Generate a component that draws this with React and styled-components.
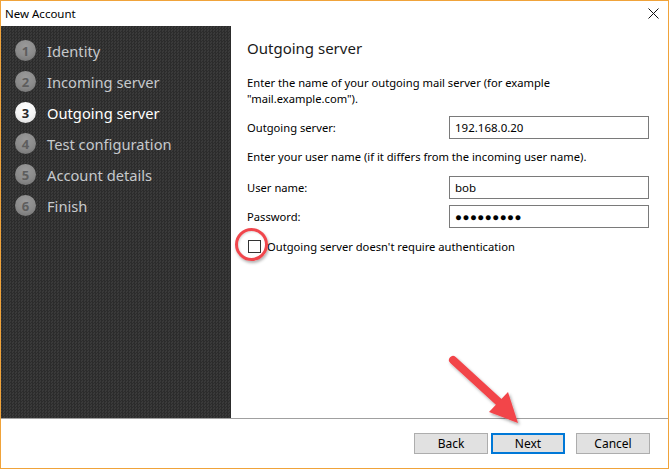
import React from "react";
import styled, { createGlobalStyle } from "styled-components";

const Global = createGlobalStyle`
  html, body { margin: 0; padding: 0; background: #fff; }
  body { font-family: "Noto Sans", "Open Sans", sans-serif; }
  * { box-sizing: border-box; }
`;

const Window = styled.div`
  position: relative;
  width: 669px;
  height: 469px;
  border: 1px solid #f0a33a;
  display: flex;
  flex-direction: column;
  background: #fff;
  overflow: hidden;
`;

const TitleBar = styled.div`
  height: 25px;
  flex: none;
  display: flex;
  align-items: center;
  justify-content: space-between;
  padding: 0 9px 0 4px;
  font-size: 11.5px;
  color: #000;
`;

const Body = styled.div`
  height: 392px;
  flex: none;
  display: flex;
`;

const Sidebar = styled.div`
  width: 230px;
  flex: none;
  background-color: #343434;
  background-image: conic-gradient(#2c2c2c 25%, #3a3a3a 0 50%, #2c2c2c 0 75%, #3a3a3a 0);
  background-size: 3px 3px;
  padding: 9px 0 0 14px;
  display: flex;
  flex-direction: column;
`;

const Step = styled.div`
  height: 31px;
  display: flex;
  align-items: center;
  gap: 11px;
  font-size: 14.7px;
  color: ${p => (p.$active ? "#ffffff" : "#c6c9cc")};
`;

const StepNum = styled.span`
  width: 21px;
  height: 21px;
  border-radius: 50%;
  display: flex;
  align-items: center;
  justify-content: center;
  font-size: 13px;
  font-weight: 700;
  color: ${p => (p.$active ? "#2a2a2a" : "#5e5e5e")};
  background: ${p =>
    p.$active
      ? "radial-gradient(circle at 50% 30%, #ffffff 0%, #f4f4f4 55%, #d2d2d2 100%)"
      : "radial-gradient(circle at 50% 30%, #9a9a9a 0%, #8a8a8a 55%, #6f6f6f 100%)"};
`;

const Content = styled.div`
  flex: 1;
  padding: 12px 19px 0 16px;
  display: flex;
  flex-direction: column;
  font-size: 11.2px;
  color: #000;
`;

const Heading = styled.div`
  font-size: 15px;
  line-height: 21px;
  color: #1a1a1a;
  margin-bottom: 16px;
`;

const Para = styled.div`
  line-height: 16px;
  margin-bottom: ${p => p.$mb}px;
  max-width: ${p => p.$max || "none"};
`;

const FieldRow = styled.div`
  display: flex;
  align-items: center;
  height: 23px;
  margin-bottom: ${p => p.$mb}px;
`;

const Label = styled.span`
  width: 202px;
  flex: none;
`;

const Input = styled.div`
  width: 200px;
  height: 23px;
  border: 1px solid #7a7a7a;
  padding-left: 5px;
  display: flex;
  align-items: center;
  font-size: 11.5px;
  letter-spacing: ${p => (p.$password ? "0.5px" : "0")};
`;

const CheckRow = styled.div`
  position: relative;
  display: flex;
  align-items: center;
  gap: 6px;
  height: 14px;
`;

const Box = styled.span`
  width: 13px;
  height: 13px;
  border: 1px solid #333;
  background: #fff;
  flex: none;
  margin-left: 1px;
`;

const Ring = styled.span`
  position: absolute;
  left: -12px;
  top: -11px;
  width: 33px;
  height: 33px;
  border-radius: 50%;
  border: 3px solid #f0464c;
  box-shadow: 1px 2px 3px rgba(0,0,0,0.3), inset 1px 1px 2px rgba(0,0,0,0.15);
`;

const Separator = styled.div`
  height: 1px;
  background: #a0a0a0;
  flex: none;
`;

const Footer = styled.div`
  flex: 1;
  display: flex;
  justify-content: flex-end;
  align-items: flex-start;
  padding: 14px 18px 0 0;
`;

const Button = styled.div`
  width: 74px;
  height: 21px;
  display: flex;
  align-items: center;
  justify-content: center;
  background: #e1e1e1;
  border: ${p => (p.$primary ? "2px solid #0078d7" : "1px solid #adadad")};
  font-size: 12px;
  margin-left: ${p => p.$ml || 0}px;
`;

const ArrowSvg = styled.svg`
  position: absolute;
  left: 440px;
  top: 345px;
  overflow: visible;
`;

const steps = ["Identity", "Incoming server", "Outgoing server", "Test configuration", "Account details", "Finish"];

export default function App() {
  return (
    <>
      <Global />
      <Window>
        <TitleBar>
          <span>New Account</span>
          <svg width="11" height="11" viewBox="0 0 11 11">
            <path d="M0.5 0.5 L10.5 10.5 M10.5 0.5 L0.5 10.5" stroke="#111" strokeWidth="1" />
          </svg>
        </TitleBar>
        <Body>
          <Sidebar>
            {steps.map((s, i) => (
              <Step key={s} $active={i === 2}>
                <StepNum $active={i === 2}>{i + 1}</StepNum>
                <span>{s}</span>
              </Step>
            ))}
          </Sidebar>
          <Content>
            <Heading>Outgoing server</Heading>
            <Para $mb={9} $max="310px">
              Enter the name of your outgoing mail server (for example "mail.example.com").
            </Para>
            <FieldRow $mb={10}>
              <Label>Outgoing server:</Label>
              <Input>192.168.0.20</Input>
            </FieldRow>
            <Para $mb={11}>
              Enter your user name (if it differs from the incoming user name).
            </Para>
            <FieldRow $mb={6}>
              <Label>User name:</Label>
              <Input>bob</Input>
            </FieldRow>
            <FieldRow $mb={11}>
              <Label>Password:</Label>
              <Input $password>●●●●●●●●●</Input>
            </FieldRow>
            <CheckRow>
              <Box />
              <span>Outgoing server doesn't require authentication</span>
              <Ring />
            </CheckRow>
          </Content>
        </Body>
        <Separator />
        <Footer>
          <Button>Back</Button>
          <Button $primary $ml={3}>Next</Button>
          <Button $ml={11}>Cancel</Button>
        </Footer>
        <ArrowSvg width="100" height="90" viewBox="0 0 100 90">
          <defs>
            <filter id="sh" x="-20%" y="-20%" width="150%" height="150%">
              <feDropShadow dx="1.5" dy="2" stdDeviation="1.5" floodColor="#000" floodOpacity="0.35" />
            </filter>
          </defs>
          <g filter="url(#sh)">
            <line x1="12" y1="14" x2="60" y2="58" stroke="#f2444a" strokeWidth="8" strokeLinecap="round" />
            <polygon points="77,77 48,66 67,46" fill="#f2444a" />
          </g>
        </ArrowSvg>
      </Window>
    </>
  );
}
